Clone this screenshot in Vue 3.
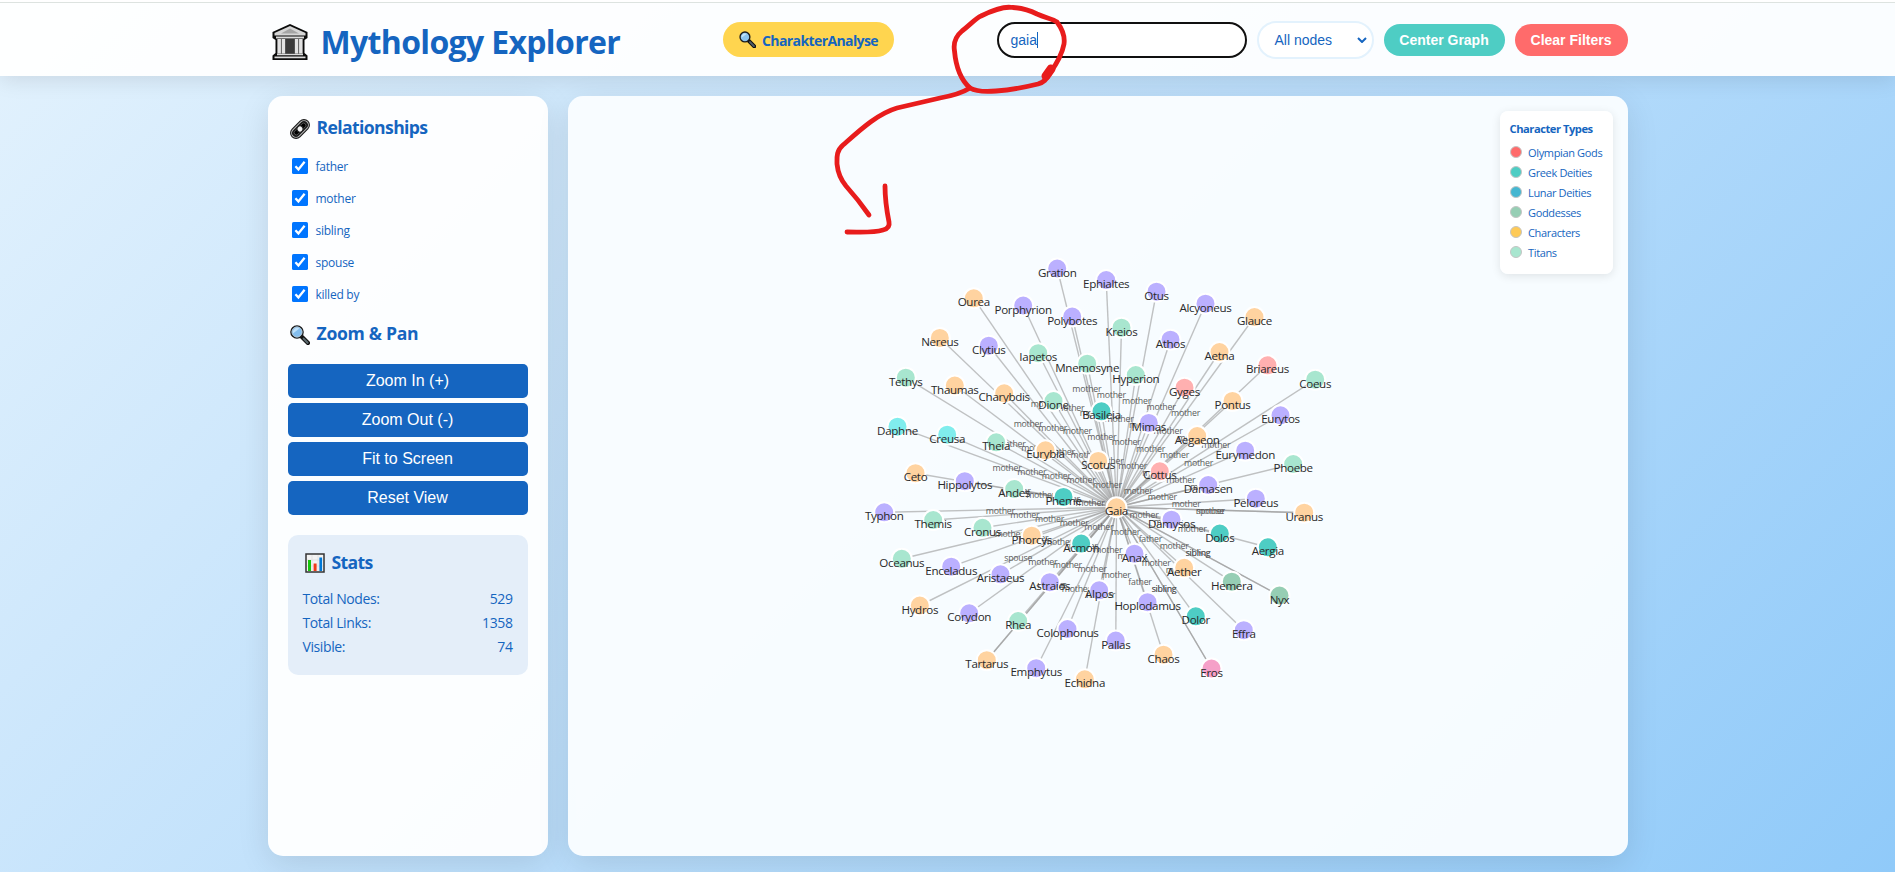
<script setup>
import { ref } from 'vue'

const search = ref('gaia')
const relationships = ref([
  { name: 'father', on: true },
  { name: 'mother', on: true },
  { name: 'sibling', on: true },
  { name: 'spouse', on: true },
  { name: 'killed by', on: true },
])
const zoomActions = ['Zoom In (+)', 'Zoom Out (-)', 'Fit to Screen', 'Reset View']
const stats = [
  ['Total Nodes:', 529],
  ['Total Links:', 1358],
  ['Visible:', 74],
]
const legend = [
  ['Olympian Gods', '#ff6b6b'],
  ['Greek Deities', '#4ecdc4'],
  ['Lunar Deities', '#45b7d1'],
  ['Goddesses', '#96ceb4'],
  ['Characters', '#feca57'],
  ['Titans', '#a8e6cf'],
]

const colors = {
  giant: '#bbb0ff',
  char: '#ffd3a0',
  titan: '#a8e6cf',
  deity: '#4ecdc4',
  nymph: '#80eded',
  hundred: '#ffb0b0',
  goddess: '#96ceb4',
  love: '#f5a0c8',
}

// name, x, y, type, relations to Gaia
const nodes = [
  ['Gration', 1056.7, 268.5, 'giant'],
  ['Ephialtes', 1105.7, 280, 'giant'],
  ['Otus', 1156, 291.7, 'giant'],
  ['Alcyoneus', 1205, 303.7, 'giant'],
  ['Glauce', 1254, 317, 'char'],
  ['Ourea', 973.3, 298.3, 'char'],
  ['Porphyrion', 1022.7, 305.5, 'giant'],
  ['Polybotes', 1071.7, 316.5, 'giant'],
  ['Kreios', 1121, 327.7, 'titan'],
  ['Athos', 1170, 339.7, 'giant'],
  ['Aetna', 1219, 352, 'char'],
  ['Briareus', 1267, 365.3, 'hundred'],
  ['Coeus', 1314.7, 379.7, 'titan'],
  ['Nereus', 939.3, 337.9, 'char'],
  ['Clytius', 988.3, 345.7, 'giant'],
  ['Iapetos', 1037.7, 353.2, 'titan'],
  ['Mnemosyne', 1086.7, 363.7, 'titan'],
  ['Hyperion', 1135.3, 375, 'titan'],
  ['Gyges', 1184, 387.7, 'hundred'],
  ['Pontus', 1232, 400.9, 'char'],
  ['Eurytos', 1280, 415.3, 'giant'],
  ['Tethys', 905.3, 377.7, 'titan'],
  ['Thaumas', 954.3, 385.5, 'char'],
  ['Charybdis', 1003.7, 393.3, 'char'],
  ['Dione', 1053, 401, 'titan'],
  ['Basileia', 1101, 411.3, 'deity'],
  ['Mimas', 1148.3, 422.9, 'giant'],
  ['Aegaeon', 1196.7, 436, 'char'],
  ['Eurymedon', 1244.7, 450.7, 'giant'],
  ['Phoebe', 1292.7, 464, 'titan'],
  ['Daphne', 897, 426.7, 'nymph'],
  ['Creusa', 946.7, 434.7, 'nymph'],
  ['Theia', 995.7, 442.3, 'titan'],
  ['Eurybia', 1045, 450.3, 'char'],
  ['Scotus', 1097.7, 460.9, 'char'],
  ['Cottus', 1159.3, 471.3, 'hundred'],
  ['Damasen', 1207.7, 485, 'giant'],
  ['Peloreus', 1255.3, 498.7, 'giant'],
  ['Uranus', 1303.7, 512.7, 'char', ['spouse', 'mother']],
  ['Ceto', 915, 473.2, 'char'],
  ['Hippolytos', 964.3, 481.2, 'giant'],
  ['Andes', 1013.7, 489, 'titan'],
  ['Pheme', 1063, 496.9, 'deity'],
  ['Typhon', 883.7, 512.3, 'giant'],
  ['Themis', 932.7, 520, 'titan'],
  ['Cronus', 982, 527.8, 'titan'],
  ['Phorcys', 1031.3, 535.7, 'char'],
  ['Acmon', 1080.7, 543.6, 'deity'],
  ['Oceanus', 901.3, 558.8, 'titan'],
  ['Enceladus', 950.7, 566.7, 'giant'],
  ['Aristaeus', 1000, 574.3, 'giant'],
  ['Astraios', 1049.3, 582.2, 'giant'],
  ['Alpos', 1098.7, 590.3, 'giant'],
  ['Hydros', 919.3, 605.5, 'char', ['spouse']],
  ['Corydon', 968.7, 613.3, 'giant'],
  ['Rhea', 1017.7, 621, 'titan'],
  ['Colophonus', 1067, 629, 'giant'],
  ['Tartarus', 986.3, 660.2, 'char', ['mother', 'spouse']],
  ['Emphytus', 1035.7, 668.2, 'giant'],
  ['Echidna', 1084.3, 679.3, 'char'],
  ['Damysos', 1171, 519.7, 'giant'],
  ['Dolos', 1219.3, 533.5, 'deity'],
  ['Aergia', 1267.3, 547.3, 'deity'],
  ['Anax', 1134, 553.7, 'giant'],
  ['Aether', 1183.7, 567.8, 'char', ['father']],
  ['Hemera', 1231.3, 581.7, 'goddess'],
  ['Nyx', 1279, 595.5, 'goddess', ['sibling', 'sibling']],
  ['Hoplodamus', 1147, 602.2, 'giant'],
  ['Dolor', 1195.3, 616.3, 'deity'],
  ['Effra', 1243.3, 630.2, 'giant'],
  ['Pallas', 1115.3, 640.5, 'giant'],
  ['Chaos', 1163, 654.7, 'char', ['father']],
  ['Eros', 1211, 668.5, 'love', ['sibling', 'sibling']],
  ['Gaia', 1116, 507.3, 'char', []],
].map(([name, x, y, type, rels = ['mother']]) => ({
  name,
  x: x - 567.5,
  y: y - 96,
  fill: colors[type],
  rels,
}))

const gaia = nodes[nodes.length - 1]
const links = nodes.flatMap((n) =>
  n.rels.map((label, i) => ({
    id: n.name + i,
    label,
    x: n.x,
    y: n.y,
    mx: (n.x + gaia.x) / 2,
    my: (n.y + gaia.y) / 2,
  })),
)
</script>

<template>
  <div class="page">
    <header class="header">
      <div class="header-inner">
        <h1 class="brand">
          <svg class="temple" viewBox="0 0 36 36">
            <path d="M18 0 35.500 8v6l-3 2v13l3 2.500V36H.5v-4.500l3-2.500V16l-3-2V8z" fill="#0b0b0b" />
            <path d="M18 2 33.500 9v2.500h-31V9z" fill="#d6d6d6" />
            <path d="M18 4.500 27 9.500H9z" fill="#a5a5a5" />
            <path d="M4 12.500h28v2H4zM2.500 32.500h31v1.700h-31zM5 29.500h26v1.800H5z" fill="#dcdcdc" />
            <path d="M5.500 15h25v14.500h-25z" fill="#6b6b6b" />
            <path d="M5.500 15h3.400v14.500H5.500zM10 15h3v14.500h-3zM23 15h3v14.500h-3zM27.100 15h3.400v14.500h-3.400z" fill="#e2e2e2" />
            <path d="M13.500 15h9v14.500h-9z" fill="#3a3a3a" />
          </svg>
          <span>Mythology Explorer</span>
        </h1>
        <button class="analyse">
          <svg class="lens-sm" viewBox="0 0 20 20">
            <path d="m11 11 7 7" stroke="#111" stroke-width="4.6" stroke-linecap="round" />
            <path d="m13 13 4.6 4.8" stroke="#52606a" stroke-width="2.2" stroke-linecap="round" />
            <circle cx="7" cy="7" r="5.8" fill="#8cc4ee" stroke="#1c1c1c" stroke-width="1.6" />
            <path d="M3 8a4.2 4.2 0 0 1 6-4.6z" fill="#c4e4fa" />
          </svg>
          <span>CharakterAnalyse</span>
        </button>
        <div class="controls">
          <div class="search"><span>{{ search }}</span><i class="caret"></i></div>
          <div class="select">
            <span>All nodes</span>
            <svg viewBox="0 0 10 6"><path d="m1 1 4 4 4-4" fill="none" stroke="#1565c0" stroke-width="2" /></svg>
          </div>
          <button class="pill center">Center Graph</button>
          <button class="pill clear">Clear Filters</button>
        </div>
      </div>
    </header>

    <main class="content">
      <aside class="sidebar">
        <h3 class="heading">
          <svg class="icon" viewBox="0 0 20 20">
            <g transform="rotate(-45 10 10)" fill="none">
              <rect x="-1.600" y="4" width="23.200" height="12" rx="6" fill="#1a1a1a" />
              <rect x="0" y="5.600" width="20" height="8.800" rx="4.400" stroke="#b9b9b9" stroke-width="1" />
              <rect x="2.600" y="7.800" width="14.800" height="4.400" rx="2.200" fill="#000" stroke="#777" stroke-width=".6" />
              <circle cx="10" cy="10" r="3.100" fill="#f4f4f4" stroke="#222" stroke-width="1.2" />
            </g>
          </svg>
          <span>Relationships</span>
        </h3>
        <div class="filters">
          <label v-for="r in relationships" :key="r.name" class="filter">
            <svg class="check" viewBox="0 0 16 16">
              <rect width="16" height="16" rx="1.6" fill="#0075ff" />
              <path d="m3.4 8.3 3 3.1 6.2-7.6" fill="none" stroke="#fff" stroke-width="2.3" />
            </svg>
            <span>{{ r.name }}</span>
          </label>
        </div>

        <h3 class="heading zoom-heading">
          <svg class="icon" viewBox="0 0 20 20">
            <path d="m12 12 6 6" stroke="#111" stroke-width="4.2" stroke-linecap="round" />
            <path d="m13.6 13.6 4 4.2" stroke="#5d6b70" stroke-width="2" stroke-linecap="round" />
            <circle cx="7" cy="7" r="6.1" fill="#84beee" stroke="#1c1c1c" stroke-width="1.4" />
            <circle cx="7" cy="7" r="5" fill="none" stroke="#b8c4cc" stroke-width=".8" />
            <path d="M3 8.4a4.4 4.4 0 0 1 6.4-5z" fill="#bfe1fa" />
          </svg>
          <span>Zoom &amp; Pan</span>
        </h3>
        <div class="zoom-buttons">
          <button v-for="a in zoomActions" :key="a">{{ a }}</button>
        </div>

        <section class="stats">
          <h3 class="heading">
            <svg class="icon" viewBox="0 0 20 20">
              <rect x="1" y="1" width="18" height="18" fill="#f3f3f3" stroke="#333" stroke-width="1.5" />
              <path d="M7 2v16M13 2v16M2 7h16M2 13h16" stroke="#dcdcdc" stroke-width=".7" />
              <path d="M3 7h3v11H3z" fill="#16c60c" />
              <path d="M8.6 10.500h3V18h-3z" fill="#f03a17" />
              <path d="M14.400 4.500h2.700V18h-2.700z" fill="#0078d7" />
            </svg>
            <span>Stats</span>
          </h3>
          <div v-for="s in stats" :key="s[0]" class="stat">
            <span>{{ s[0] }}</span><span>{{ s[1] }}</span>
          </div>
        </section>
      </aside>

      <section class="graph">
        <svg class="canvas" viewBox="0 0 1060 760">
          <g class="links">
            <line v-for="l in links" :key="l.id" :x1="gaia.x" :y1="gaia.y" :x2="l.x" :y2="l.y" />
          </g>
          <g class="link-labels">
            <text v-for="l in links" :key="l.id" :x="l.mx" :y="l.my + 4.2">{{ l.label }}</text>
          </g>
          <g class="nodes">
            <circle v-for="n in nodes" :key="n.name" :cx="n.x" :cy="n.y" r="10" :fill="n.fill" />
          </g>
          <g class="node-labels">
            <text v-for="n in nodes" :key="n.name" :x="n.x" :y="n.y + 8">{{ n.name }}</text>
          </g>
        </svg>
        <div class="legend">
          <h4>Character Types</h4>
          <div v-for="item in legend" :key="item[0]" class="legend-item">
            <svg viewBox="0 0 12 12"><circle cx="6" cy="6" r="5.5" :fill="item[1]" stroke="#c4c4c4" /></svg>
            <span>{{ item[0] }}</span>
          </div>
        </div>
      </section>
    </main>

    <svg class="annotation" viewBox="0 0 1895 872">
      <path d="M1013 7.500C1024 8 1031 11 1037 14C1046 18 1053 19 1057 22C1063 30 1065 37 1064 44C1062 55 1055 66 1050 73C1046 80 1044 82 1038 84C1022 88 1009 90 996 91C985 92 977 92 970 88C961 80 956 68 954.500 51C953 42 956 36 962 31C970 25 976 18 981 16C993 10 1003 6 1013 7.500" />
      <path d="M970 88C962 93 951 96 940 98L897 108C877 114 860 130 843 145C836 151 837 158 837 164C838 174 841 180 846 186C855 196 862 205 869 215" />
      <path d="M885 186C885 200 887 212 889 222C890 227 887 229 883 230C873 233 863 232 847 232" />
      <path class="blot" d="m1051 69-5 7" />
    </svg>
  </div>
</template>

<style>
body {
  margin: 0;
  overflow: hidden;
}
</style>

<style scoped>
.page {
  position: relative;
  box-sizing: border-box;
  width: 100%;
  height: 872px;
  display: flex;
  flex-direction: column;
  background: linear-gradient(135deg, #e3f2fd 0%, #bbdefb 50%, #90caf9 100%);
  color: #1565c0;
  font-family: "Open Sans", "Noto Sans", sans-serif;
}
* {
  box-sizing: border-box;
}
.header {
  height: 76px;
  border-top: 2px solid #fff;
  background: rgba(255, 255, 255, 0.94);
  box-shadow: 0 4px 20px rgba(0, 0, 0, 0.1);
}
.header-inner {
  height: 74px;
  border-top: 1px solid #dde3e0;
  padding: 0 267.5px;
  display: flex;
  align-items: center;
  justify-content: space-between;
}
.brand {
  margin: 0;
  display: flex;
  align-items: center;
  gap: 13px;
  width: 353px;
  padding-left: 4px;
  font-size: 32px;
  font-weight: 700;
  line-height: 44px;
  letter-spacing: -0.66px;
  white-space: nowrap;
}
.brand span {
  margin-top: 4px;
}
.temple {
  width: 36px;
  height: 36px;
  flex: none;
  margin-top: 5px;
}
button {
  border: 0;
  padding: 0;
}
.analyse {
  display: flex;
  align-items: center;
  justify-content: center;
  gap: 6px;
  width: 171px;
  height: 35px;
  border-radius: 20px;
  background: #ffd54f;
  color: #1565c0;
  font: 700 14px "Open Sans", "Noto Sans", sans-serif;
  letter-spacing: -0.6px;
}
.analyse span {
  margin-top: 1px;
}
.lens-sm {
  width: 17px;
  height: 17px;
}
.controls {
  display: flex;
  align-items: center;
  gap: 10px;
  font-family: "Liberation Sans", Arial, sans-serif;
  font-size: 14px;
}
.search {
  display: flex;
  align-items: center;
  width: 250px;
  height: 36px;
  padding: 0 12px;
  border: 2px solid #101010;
  border-radius: 20px;
  background: #fff;
}
.caret {
  width: 1px;
  height: 16px;
  background: #1565c0;
}
.select {
  display: flex;
  align-items: center;
  justify-content: space-between;
  width: 117px;
  height: 38px;
  padding: 0 5px 0 16px;
  border: 2px solid #e3f2fd;
  border-radius: 20px;
  background: #fff;
}
.select svg {
  width: 10px;
  height: 6px;
}
.pill {
  height: 32px;
  border-radius: 20px;
  color: #fff;
  font: 700 14px "Liberation Sans", Arial, sans-serif;
}
.center {
  width: 121px;
  background: #4ecdc4;
}
.clear {
  width: 113px;
  background: #ff6b6b;
}
.content {
  display: flex;
  gap: 20px;
  height: 760px;
  margin: 20px 267.5px 0;
}
.sidebar,
.graph {
  height: 760px;
  border-radius: 15px;
  background: rgba(255, 255, 255, 0.94);
  box-shadow: 0 8px 32px rgba(0, 0, 0, 0.1);
}
.sidebar {
  width: 280px;
  flex: none;
  padding: 20px;
}
.heading {
  margin: 0;
  display: flex;
  align-items: center;
  gap: 7px;
  height: 25px;
  padding-left: 2px;
  font-size: 17.6px;
  line-height: 23px;
  font-weight: 700;
  letter-spacing: -0.62px;
}
.heading span {
  margin-top: -2px;
}
.zoom-heading {
  letter-spacing: -0.3px;
}
.icon {
  width: 20px;
  height: 20px;
  flex: none;
}
.filters {
  margin-top: 9px;
}
.filter {
  display: flex;
  align-items: center;
  gap: 8px;
  height: 32px;
  padding-left: 4px;
  font-size: 12px;
  letter-spacing: -0.25px;
}
.filter span {
  margin-top: 1px;
}
.check {
  width: 16px;
  height: 16px;
}
.zoom-heading {
  margin-top: 12px;
}
.zoom-buttons {
  display: flex;
  flex-direction: column;
  gap: 5px;
  margin-top: 17px;
}
.zoom-buttons button {
  height: 34px;
  border-radius: 5px;
  background: #1565c0;
  color: #fff;
  font: 16px "Liberation Sans", Arial, sans-serif;
}
.stats {
  height: 140px;
  margin-top: 20px;
  padding: 15px;
  border-radius: 10px;
  background: rgba(21, 101, 192, 0.1);
}
.stats .heading {
  margin-bottom: 12px;
}
.stats .heading span {
  margin-top: 0;
}
.stat {
  display: flex;
  justify-content: space-between;
  height: 24px;
  line-height: 24px;
  font-size: 14px;
  letter-spacing: -0.4px;
}
.graph {
  position: relative;
  flex: 1;
  background: rgba(250, 253, 255, 0.96);
}
.canvas {
  display: block;
  width: 1060px;
  height: 760px;
}
.links line {
  stroke: #999;
  stroke-opacity: 0.6;
  stroke-width: 1.4;
}
.nodes circle {
  stroke: #fff;
  stroke-width: 2;
}
.link-labels text {
  text-anchor: middle;
  font-size: 8.8px;
  letter-spacing: -0.25px;
  fill: #5c5c5c;
}
.node-labels text {
  text-anchor: middle;
  font-size: 11.6px;
  letter-spacing: -0.32px;
  fill: #2a2a2a;
}
.legend {
  position: absolute;
  top: 15px;
  right: 15px;
  width: 113px;
  height: 163px;
  padding: 9px 10px;
  border-radius: 8px;
  background: rgba(255, 255, 255, 0.95);
  box-shadow: 0 2px 10px rgba(0, 0, 0, 0.1);
}
.legend h4 {
  margin: 0 0 4px;
  font-size: 11.2px;
  line-height: 18px;
  letter-spacing: -0.48px;
  white-space: nowrap;
}
.legend-item {
  display: flex;
  align-items: center;
  gap: 6.500px;
  height: 20px;
  font-size: 11px;
  letter-spacing: -0.35px;
  white-space: nowrap;
}
.legend-item svg {
  width: 12px;
  height: 12px;
}
.annotation {
  position: absolute;
  inset: 0;
  width: 1895px;
  height: 872px;
  pointer-events: none;
}
.annotation path {
  fill: none;
  stroke: #e81c1c;
  stroke-width: 4.8;
  stroke-linecap: round;
  stroke-linejoin: round;
}
.annotation .blot {
  stroke-width: 9;
}
</style>
